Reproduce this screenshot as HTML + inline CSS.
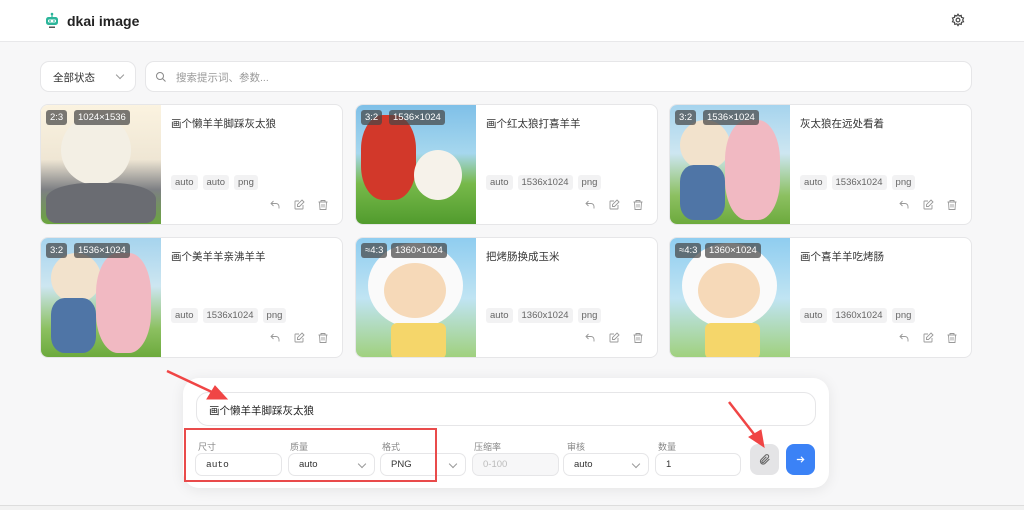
<!DOCTYPE html>
<html><head><meta charset="utf-8"><style>
*{box-sizing:border-box;margin:0;padding:0}
body{width:1024px;height:510px;overflow:hidden;background:#f7f7f8;font-family:"Liberation Sans","Noto Sans CJK SC",sans-serif;position:relative;color:#333}
.hdr{position:absolute;left:0;top:0;width:1024px;height:42px;background:#fff;border-bottom:1px solid #e8e8ea}
.logo{position:absolute;left:67px;top:13px;font-size:14px;font-weight:bold;color:#222}
.box{position:absolute;background:#fff;border:1px solid #e6e6e8;border-radius:9px}
.card{position:absolute;width:303px;height:121px;background:#fff;border:1px solid #e6e6e8;border-radius:8px;overflow:hidden}
.img{position:absolute;left:0;top:0;width:120px;height:121px}
.badge{position:absolute;top:5px;height:15px;background:rgba(70,70,70,.72);color:#fff;font-size:9.5px;line-height:15px;padding:0 4px;border-radius:3px}
.title{position:absolute;left:130px;top:11px;font-size:10.5px;color:#333}
.tags{position:absolute;left:130px;top:70px;display:flex;gap:5px}
.tag{background:#f2f2f3;color:#666;font-size:9.5px;height:15px;line-height:15px;padding:0 4px;border-radius:3px}
.icons{position:absolute;left:228px;top:94px;display:flex;gap:12px}
.icons svg{width:12px;height:12px}
.lbl{position:absolute;top:440px;font-size:9px;color:#888}
.inp{position:absolute;top:453px;height:23px;background:#fff;border:1px solid #e6e6e8;border-radius:7px;font-size:9.5px;line-height:21px;padding-left:10px;color:#333}
.chev{position:absolute;right:9px;top:7px;width:6px;height:6px;border-right:1px solid #999;border-bottom:1px solid #999;transform:rotate(45deg)}
</style></head><body>
<div class="hdr">
<svg style="position:absolute;left:44px;top:12px" width="16" height="18" viewBox="0 0 16 18"><circle cx="8" cy="2" r="1.3" fill="#2bb59a"/><rect x="7.4" y="2" width="1.2" height="3" fill="#2bb59a"/><rect x="2" y="5" width="12" height="8" rx="2.5" fill="#2bb59a"/><rect x="4" y="7.5" width="8" height="3" rx="1.2" fill="#fff"/><circle cx="6" cy="9" r=".9" fill="#2bb59a"/><circle cx="10" cy="9" r=".9" fill="#2bb59a"/><rect x="5" y="14.5" width="6" height="1.5" fill="#555"/></svg>
<div class="logo">dkai image</div>
<svg style="position:absolute;left:951px;top:13px" width="14" height="14" viewBox="0 0 24 24" fill="none" stroke="#444" stroke-width="2"><circle cx="12" cy="12" r="3.2"/><path d="M12 2l2 3 3.5-1 .5 3.5 3.5 1-1.5 3.5 1.5 3-3.5 1-.5 3.5-3.5-1-2 3-2-3-3.5 1-.5-3.5-3.5-1 1.5-3-1.5-3.5 3.5-1 .5-3.5 3.5 1z"/></svg>
</div>
<div class="box" style="left:40px;top:61px;width:96px;height:31px"><span style="position:absolute;left:12px;top:8px;font-size:10.5px;color:#333">全部状态</span><div class="chev" style="top:10px;right:12px"></div></div>
<div class="box" style="left:145px;top:61px;width:827px;height:31px"><svg style="position:absolute;left:9px;top:9px" width="12" height="12" viewBox="0 0 24 24" fill="none" stroke="#888" stroke-width="2"><circle cx="10" cy="10" r="7"/><path d="M15 15l6 6"/></svg><span style="position:absolute;left:30px;top:8px;font-size:10.5px;color:#999">搜索提示词、参数...</span></div>

<div class="card" style="left:40px;top:104px"><div class="img" style="background:linear-gradient(180deg,#fbf3e0 0%,#efe6d4 45%,#7d7f83 70%,#6aa83a 100%)"><div style="position:absolute;left:20px;top:10px;width:70px;height:70px;border-radius:50%;background:#f3efe4"></div><div style="position:absolute;left:5px;top:78px;width:110px;height:40px;border-radius:40% 40% 10px 10px;background:#6a6c72"></div></div><div class="badge" style="left:5px">2:3</div><div class="badge" style="left:33px">1024×1536</div><div class="title">画个懒羊羊脚踩灰太狼</div><div class="tags"><span class="tag">auto</span><span class="tag">auto</span><span class="tag">png</span></div><div class="icons"></div></div>

<div class="card" style="left:355px;top:104px"><div class="img" style="background:linear-gradient(180deg,#7fc0e8 0%,#a6d7ee 40%,#77b94a 65%,#4f9a2c 100%)"><div style="position:absolute;left:5px;top:10px;width:55px;height:85px;border-radius:40%;background:#d2382a"></div><div style="position:absolute;left:58px;top:45px;width:48px;height:50px;border-radius:50%;background:#f6f2ea"></div></div><div class="badge" style="left:5px">3:2</div><div class="badge" style="left:33px">1536×1024</div><div class="title">画个红太狼打喜羊羊</div><div class="tags"><span class="tag">auto</span><span class="tag">1536x1024</span><span class="tag">png</span></div><div class="icons"></div></div>

<div class="card" style="left:669px;top:104px"><div class="img" style="background:linear-gradient(180deg,#a6d4ee 0%,#cde6f1 40%,#8cc061 75%,#6aa83a 100%)"><div style="position:absolute;left:10px;top:15px;width:50px;height:50px;border-radius:50%;background:#f2e2cc"></div><div style="position:absolute;left:55px;top:15px;width:55px;height:100px;border-radius:40%;background:#f1b9c2"></div><div style="position:absolute;left:10px;top:60px;width:45px;height:55px;border-radius:30%;background:#4f75a6"></div></div><div class="badge" style="left:5px">3:2</div><div class="badge" style="left:33px">1536×1024</div><div class="title">灰太狼在远处看着</div><div class="tags"><span class="tag">auto</span><span class="tag">1536x1024</span><span class="tag">png</span></div><div class="icons"></div></div>

<div class="card" style="left:40px;top:237px"><div class="img" style="background:linear-gradient(180deg,#a6d4ee 0%,#cde6f1 40%,#8cc061 75%,#6aa83a 100%)"><div style="position:absolute;left:10px;top:15px;width:50px;height:50px;border-radius:50%;background:#f2e2cc"></div><div style="position:absolute;left:55px;top:15px;width:55px;height:100px;border-radius:40%;background:#f1b9c2"></div><div style="position:absolute;left:10px;top:60px;width:45px;height:55px;border-radius:30%;background:#4f75a6"></div></div><div class="badge" style="left:5px">3:2</div><div class="badge" style="left:33px">1536×1024</div><div class="title">画个美羊羊亲沸羊羊</div><div class="tags"><span class="tag">auto</span><span class="tag">1536x1024</span><span class="tag">png</span></div><div class="icons"></div></div>

<div class="card" style="left:355px;top:237px"><div class="img" style="background:linear-gradient(180deg,#8fcdf0 0%,#c0e4f3 50%,#9fd07a 100%)"><div style="position:absolute;left:12px;top:5px;width:95px;height:85px;border-radius:50%;background:#fafafa"></div><div style="position:absolute;left:28px;top:25px;width:62px;height:55px;border-radius:50%;background:#f6d9b8"></div><div style="position:absolute;left:35px;top:85px;width:55px;height:36px;background:#f5d66a;border-radius:6px"></div></div><div class="badge" style="left:5px">≈4:3</div><div class="badge" style="left:35px">1360×1024</div><div class="title">把烤肠换成玉米</div><div class="tags"><span class="tag">auto</span><span class="tag">1360x1024</span><span class="tag">png</span></div><div class="icons"></div></div>

<div class="card" style="left:669px;top:237px"><div class="img" style="background:linear-gradient(180deg,#8fcdf0 0%,#c0e4f3 50%,#9fd07a 100%)"><div style="position:absolute;left:12px;top:5px;width:95px;height:85px;border-radius:50%;background:#fafafa"></div><div style="position:absolute;left:28px;top:25px;width:62px;height:55px;border-radius:50%;background:#f6d9b8"></div><div style="position:absolute;left:35px;top:85px;width:55px;height:36px;background:#f5d66a;border-radius:6px"></div></div><div class="badge" style="left:5px">≈4:3</div><div class="badge" style="left:35px">1360×1024</div><div class="title">画个喜羊羊吃烤肠</div><div class="tags"><span class="tag">auto</span><span class="tag">1360x1024</span><span class="tag">png</span></div><div class="icons"></div></div>

<div style="position:absolute;left:0;top:505px;width:1024px;height:5px;border-top:1px solid #ddd;background:#f2f2f2"></div>
<div style="position:absolute;left:183px;top:378px;width:646px;height:110px;background:#fff;border-radius:16px;box-shadow:0 2px 14px rgba(0,0,0,.08)"></div>
<div class="box" style="left:196px;top:392px;width:620px;height:34px;border-radius:12px"><span style="position:absolute;left:12px;top:10px;font-size:10.5px;color:#222">画个懒羊羊脚踩灰太狼</span></div>
<div class="lbl" style="left:198px">尺寸</div><div class="lbl" style="left:290px">质量</div><div class="lbl" style="left:382px">格式</div><div class="lbl" style="left:474px">压缩率</div><div class="lbl" style="left:567px">审核</div><div class="lbl" style="left:658px">数量</div>
<div class="inp" style="left:195px;width:87px;font-family:'Liberation Mono',monospace">auto</div>
<div class="inp" style="left:288px;width:87px">auto<div class="chev"></div></div>
<div class="inp" style="left:380px;width:86px">PNG<div class="chev"></div></div>
<div class="inp" style="left:472px;width:87px;background:#f7f7f8;color:#bbb">0-100</div>
<div class="inp" style="left:563px;width:86px">auto<div class="chev"></div></div>
<div class="inp" style="left:655px;width:86px">1</div>
<div style="position:absolute;left:750px;top:444px;width:29px;height:31px;background:#e4e4e6;border-radius:8px"><svg style="position:absolute;left:8px;top:9px" width="13" height="13" viewBox="0 0 24 24" fill="none" stroke="#666" stroke-width="2"><path d="M21 11l-8.5 8.5a5 5 0 01-7-7L14 4a3.3 3.3 0 014.7 4.7L10 17.4a1.7 1.7 0 01-2.4-2.4L15.5 7"/></svg></div>
<div style="position:absolute;left:786px;top:444px;width:29px;height:31px;background:#3b82f6;border-radius:8px"><svg style="position:absolute;left:9px;top:10px" width="11" height="11" viewBox="0 0 24 24" fill="none" stroke="#fff" stroke-width="2.6"><path d="M4 12h15M13 6l6 6-6 6"/></svg></div>
<div style="position:absolute;left:184px;top:428px;width:253px;height:54px;border:2px solid #e94b4b"></div>
<svg style="position:absolute;left:0;top:0" width="1024" height="510"><g fill="#f04545" stroke="#f04545"><path d="M167 371L214 393" stroke-width="2.5"/><path d="M227 399L207 399L215 386Z"/><path d="M729 402L757 438" stroke-width="2.5"/><path d="M764 447L749 437L761 430Z"/></g></svg>

<script>
var ic='<svg viewBox="0 0 24 24" fill="none" stroke="#999" stroke-width="1.8"><path d="M9 14L4 9l5-5"/><path d="M4 9h10a6 6 0 016 6v4"/></svg><svg viewBox="0 0 24 24" fill="none" stroke="#999" stroke-width="1.8"><path d="M12 4H5a1 1 0 00-1 1v14a1 1 0 001 1h14a1 1 0 001-1v-7"/><path d="M18 2l4 4-9 9H9v-4z"/></svg><svg viewBox="0 0 24 24" fill="none" stroke="#999" stroke-width="1.8"><path d="M3 6h18M8 6V3h8v3M5 6l1 15h12l1-15M10 10v7M14 10v7"/></svg>';
document.querySelectorAll('.icons').forEach(function(e){e.innerHTML=ic});
</script>
</body></html>
